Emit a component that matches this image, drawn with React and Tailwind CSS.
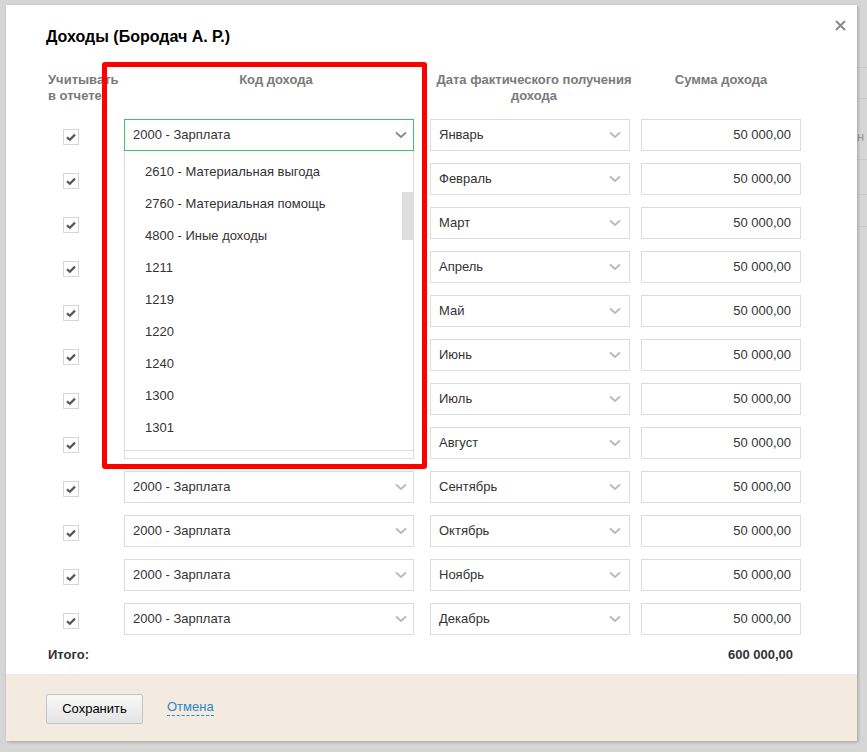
import React from 'react';

const months = [
  'Январь', 'Февраль', 'Март', 'Апрель', 'Май', 'Июнь',
  'Июль', 'Август', 'Сентябрь', 'Октябрь', 'Ноябрь', 'Декабрь',
];

const options = [
  '2610 - Материальная выгода',
  '2760 - Материальная помощь',
  '4800 - Иные доходы',
  '1211',
  '1219',
  '1220',
  '1240',
  '1300',
  '1301',
];

function Chevron({ dark }) {
  return (
    <svg width="12" height="8" viewBox="0 0 12 8" className="shrink-0">
      <path
        d="M1 1.5 L6 6 L11 1.5"
        fill="none"
        stroke={dark ? '#8a8a8a' : '#b9b9b9'}
        strokeWidth="1.8"
      />
    </svg>
  );
}

function Checkbox() {
  return (
    <div className="w-4 h-4 border border-[#d6d6d6] bg-white flex items-center justify-center">
      <svg width="12" height="12" viewBox="0 0 12 12">
        <path d="M2 6.2 L4.8 8.8 L10 3.6" fill="none" stroke="#555" strokeWidth="2.2" />
      </svg>
    </div>
  );
}

function Select({ value, active, chevronPad = 'pr-[6px]' }) {
  return (
    <div
      className={`h-8 bg-white border flex items-center justify-between pl-[8px] ${chevronPad} text-[13px] text-[#333] ${
        active ? 'border-[#3dc26a]' : 'border-[#dcdcdc]'
      }`}
    >
      <span>{value}</span>
      <Chevron dark={active} />
    </div>
  );
}

function Dropdown() {
  return (
    <div className="absolute left-0 top-full w-full h-[300px] bg-white border-x border-b border-[#dcdcdc] pt-[5px] overflow-hidden z-10">
      {options.map((o) => (
        <div key={o} className="h-8 flex items-center pl-[20px] text-[13px] text-[#333]">
          {o}
        </div>
      ))}
      <div className="absolute right-0 top-[41px] w-[11px] h-[48px] bg-[#dedede]" />
    </div>
  );
}

export default function App() {
  return (
    <div
      className="w-full h-[752px] bg-[#d6d6d6] flex overflow-hidden"
      style={{ fontFamily: '"Liberation Sans", Arial, sans-serif' }}
    >
      <div className="w-[6px] shrink-0" />

      <div className="relative mt-[5px] w-[851px] h-[736px] shrink-0 bg-white flex flex-col shadow-[1px_1px_3px_rgba(0,0,0,0.25)]">
        <button className="absolute right-[11px] top-[14px] w-[12px] h-[12px] flex items-center justify-center">
          <svg width="11" height="11" viewBox="0 0 11 11">
            <path d="M1 1 L10 10 M10 1 L1 10" stroke="#8b8b8b" strokeWidth="2" />
          </svg>
        </button>

        <div className="flex-1 px-10 pt-[23px]">
          <h1 className="text-[16px] leading-[18px] font-bold text-black">Доходы (Бородач А. Р.)</h1>

          <div className="mt-[26px] flex text-[13px] leading-4 font-bold text-[#7a7a7a] whitespace-nowrap">
            <div className="w-[78px] pl-[2px]">
              Учитывать
              <br />в отчете
            </div>
            <div className="w-[290px] text-center pl-[14px]">Код дохода</div>
            <div className="w-[200px] ml-[20px] text-center">
              Дата фактического получения
              <br />
              дохода
            </div>
            <div className="w-[160px] ml-[7px] text-center">Сумма дохода</div>
          </div>

          <div className="mt-[15px] flex flex-col gap-3">
            {months.map((m, i) => (
              <div key={m} className="flex items-center h-8">
                <div className="w-[78px] pl-[17px] pt-[3px]">
                  <Checkbox />
                </div>
                <div className="w-[290px] relative">
                  <Select value={i >= 1 && i <= 7 ? '' : '2000 - Зарплата'} active={i === 0} />
                  {i === 0 && <Dropdown />}
                </div>
                <div className="w-[200px] ml-4">
                  <Select value={m} chevronPad="pr-[8px]" />
                </div>
                <div className="w-[160px] ml-[11px] h-8 border border-[#dcdcdc] flex items-center justify-end pr-[9px] text-[13px] text-[#333]">
                  50 000,00
                </div>
              </div>
            ))}
          </div>

          <div className="mt-3 w-[755px] flex justify-between pl-[2px] pr-[8px] text-[13px] leading-4 font-bold text-[#333]">
            <span>Итого:</span>
            <span>600 000,00</span>
          </div>
        </div>

        <div className="h-[67px] bg-[#f3ebe0] px-10 pt-[20px] flex items-start gap-6">
          <button className="h-[30px] w-[97px] border border-[#c4c4c4] rounded-[2px] bg-gradient-to-b from-[#f8f8f8] to-[#e4e4e4] text-[13px] text-black">
            Сохранить
          </button>
          <a className="mt-[5px] text-[13px] leading-[16px] text-[#2f86c9] border-b border-dashed border-[#2f86c9]">
            Отмена
          </a>
        </div>

        <div className="absolute left-[96px] top-[57px] w-[325px] h-[407px] border-[5px] border-[#ff0000] rounded-[3px] pointer-events-none z-20" />
      </div>

      <div className="flex-1 flex flex-col overflow-hidden">
        <div className="h-[68px] border-b border-[#c9c9c9]" />
        <div className="h-[31px] border-b border-[#c9c9c9]" />
        <div className="h-[61px] border-b border-[#c9c9c9] pt-[30px] overflow-hidden text-[13px] leading-4 text-[#999]">
          н
        </div>
        <div className="h-[35px] border-b border-[#c9c9c9]" />
        <div className="h-[32px] border-b border-[#c9c9c9]" />
      </div>
    </div>
  );
}
